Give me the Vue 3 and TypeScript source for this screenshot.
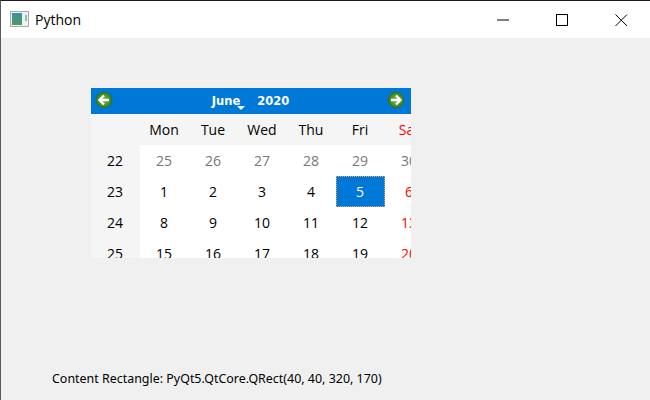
<script setup lang="ts">
interface Cell { text: string; kind: string }
const heads: Cell[] = [
  { text: '', kind: '' },
  { text: 'Mon', kind: '' }, { text: 'Tue', kind: '' }, { text: 'Wed', kind: '' },
  { text: 'Thu', kind: '' }, { text: 'Fri', kind: '' }, { text: 'Sat', kind: 'red' },
  { text: 'Sun', kind: 'red' },
]
const rows: { week: number; days: Cell[] }[] = [
  [22, [25, 26, 27, 28, 29, 30, 31]],
  [23, [1, 2, 3, 4, 5, 6, 7]],
  [24, [8, 9, 10, 11, 12, 13, 14]],
  [25, [15, 16, 17, 18, 19, 20, 21]],
].map((r) => {
  const week = r[0] as number
  const nums = r[1] as number[]
  return {
    week,
    days: nums.map((n, i) => {
      let kind = ''
      if (week === 22 && i < 6) kind = 'muted'
      else if (week === 23 && n === 5) kind = 'sel'
      else if (i >= 5) kind = 'red'
      return { text: String(n), kind }
    }),
  }
})
</script>

<template>
  <div class="window">
    <header class="titlebar">
      <svg class="appicon" width="19" height="16" viewBox="0 0 19 16">
        <defs>
          <linearGradient id="pane" x1="0" y1="0" x2="0" y2="1">
            <stop offset="0" stop-color="#3f8fa8" />
            <stop offset="1" stop-color="#4f9a62" />
          </linearGradient>
        </defs>
        <rect x="0.5" y="0.5" width="18" height="15" fill="#eef1f2" stroke="#a8acb0" />
        <rect x="2" y="2" width="10" height="12" fill="url(#pane)" />
        <rect x="15" y="4" width="2" height="6" fill="#8fc0b0" />
      </svg>
      <span class="title">Python</span>
      <div class="controls">
        <svg width="46" height="38" viewBox="0 0 46 38"><path d="M16 19h12" stroke="#000" fill="none" /></svg>
        <svg width="46" height="38" viewBox="0 0 46 38" class="ctl"><rect x="16.5" y="13.500" width="11" height="11" stroke="#000" fill="none" /></svg>
        <svg width="46" height="38" viewBox="0 0 46 38" class="ctl"><path d="M16.500 13.500l11.500 11.500M28 13.500l-11.500 11.500" stroke="#000" fill="none" /></svg>
      </div>
    </header>
    <main class="body">
      <section class="calendar">
        <div class="nav">
          <svg class="navicon" width="18" height="18" viewBox="0 0 18 18">
            <defs>
              <radialGradient id="ball" cx="0.5" cy="0.5" r="0.55">
                <stop offset="0" stop-color="#7fbf4a" />
                <stop offset="0.7" stop-color="#3f8a2a" />
                <stop offset="1" stop-color="#1f5c1c" />
              </radialGradient>
            </defs>
            <circle cx="9" cy="9" r="8.300" fill="url(#ball)" />
            <path d="M14 9H5M9 4.500L4.500 9 9 13.500" stroke="#fff" stroke-width="2.400" fill="none" />
          </svg>
          <div class="month">
            <span class="mname">June<i class="caret"></i></span>
            <span class="year">2020</span>
          </div>
          <svg class="navicon" width="18" height="18" viewBox="0 0 18 18">
            <circle cx="9" cy="9" r="8.300" fill="url(#ball)" />
            <path d="M4 9h9M9 4.500L13.500 9 9 13.500" stroke="#fff" stroke-width="2.400" fill="none" />
          </svg>
        </div>
        <div class="grid">
          <div v-for="h in heads" :key="h.text" class="cell head" :class="h.kind">{{ h.text }}</div>
          <template v-for="r in rows" :key="r.week">
            <div class="cell head">{{ r.week }}</div>
            <div v-for="d in r.days" :key="d.text" class="cell day" :class="d.kind">{{ d.text }}</div>
          </template>
        </div>
      </section>
      <p class="label">Content Rectangle: PyQt5.QtCore.QRect(40, 40, 320, 170)</p>
    </main>
  </div>
</template>

<style scoped>
.window {
  width: 650px;
  height: 400px;
  box-sizing: border-box;
  border-top: 1px solid #1c1c1c;
  border-left: 1px solid #5a5a5a;
  display: flex;
  flex-direction: column;
  overflow: hidden;
  font-family: "Open Sans", "Noto Sans", sans-serif;
  color: #000;
}
.titlebar {
  height: 37px;
  background: #fff;
  display: flex;
  align-items: center;
  padding-left: 9px;
  flex: none;
}
.appicon { flex: none; margin-top: -1px; }
.title { font-size: 14px; margin-left: 6px; margin-top: -1px; }
.controls { margin-left: auto; display: flex; margin-right: 5px; height: 37px; margin-top: -1px; }
.controls svg { display: block; flex: none; }
.controls .ctl { margin-left: 13px; }
.body {
  flex: 1;
  background: #f0f0f0;
  padding: 50px 0 0 90px;
  display: flex;
  flex-direction: column;
  align-items: flex-start;
}
.calendar {
  width: 320px;
  height: 170px;
  overflow: hidden;
  flex: none;
  background: #fff;
}
.nav {
  height: 26px;
  background: #0078d7;
  display: flex;
  align-items: center;
  justify-content: space-between;
  padding: 0 6px 0 4px;
}
.navicon { display: block; flex: none; margin-top: -2px; }
.month {
  display: flex;
  gap: 17px;
  color: #fff;
  font-family: "DejaVu Sans", sans-serif;
  font-weight: 700;
  font-size: 11.500px;
  margin-right: -1px;
}
.mname { position: relative; }
.caret {
  position: absolute;
  right: -5px;
  bottom: -2px;
  width: 0;
  height: 0;
  border-left: 4px solid transparent;
  border-right: 4px solid transparent;
  border-top: 4px solid #fff;
}
.grid {
  display: grid;
  grid-template-columns: repeat(8, 49px);
  grid-template-rows: 31px repeat(4, 31px);
  width: 392px;
}
.cell {
  display: flex;
  align-items: center;
  justify-content: center;
  font-size: 14px;
  line-height: 1;
  box-sizing: border-box;
  padding-right: 1px;
}
.head { background: #f5f5f5; }
.day { background: #fff; }
.muted { color: #777; }
.red { color: #ff0000; }
.sel {
  color: #fff;
  background-color: #0078d7;
  background-image:
    repeating-linear-gradient(90deg, #f0a050 0 1px, transparent 1px 2px),
    repeating-linear-gradient(90deg, #f0a050 0 1px, transparent 1px 2px),
    repeating-linear-gradient(0deg, #f0a050 0 1px, transparent 1px 2px),
    repeating-linear-gradient(0deg, #f0a050 0 1px, transparent 1px 2px);
  background-size: 100% 1px, 100% 1px, 1px 100%, 1px 100%;
  background-position: top left, bottom left, top left, top right;
  background-repeat: no-repeat;
}
.label {
  margin: 113px 0 0 -39px;
  font-family: "Noto Sans", sans-serif;
  font-size: 12.450px;
  line-height: 16px;
  white-space: nowrap;
  color: #000;
}
</style>
